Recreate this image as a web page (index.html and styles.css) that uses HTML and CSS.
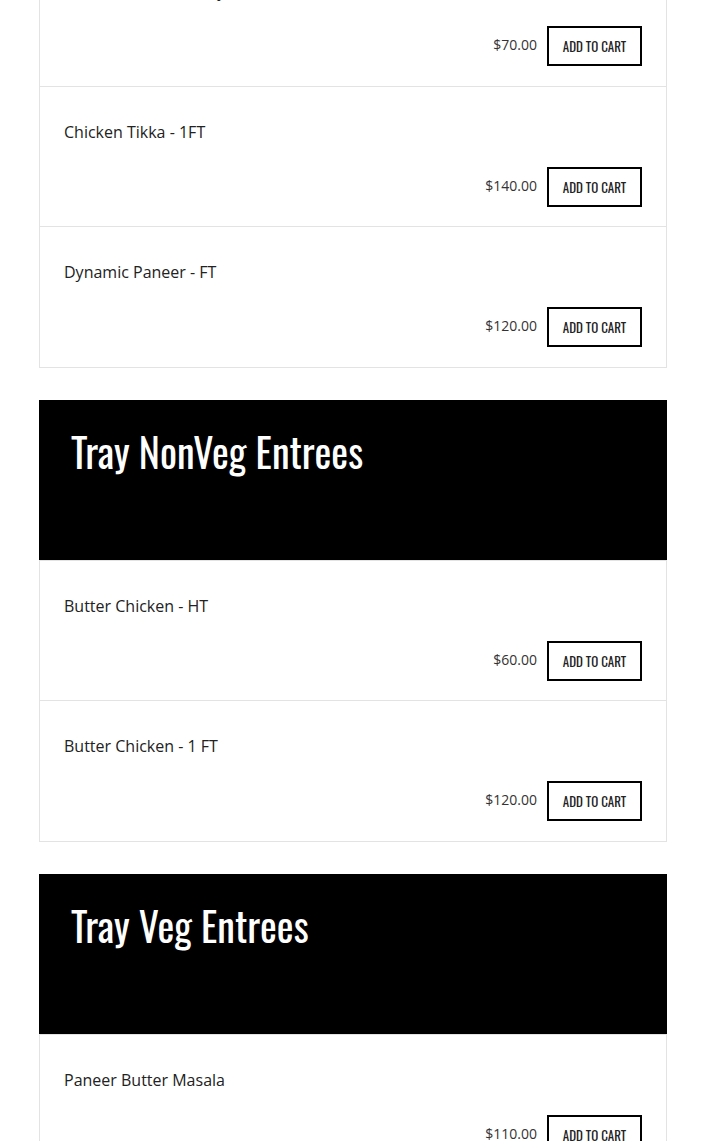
FILE: index.html
```html
<!DOCTYPE html>
<html>
<head>
<meta charset="utf-8">
<link rel="stylesheet" href="styles.css">
</head>
<body>
<div class="menu">
  <section class="category">
    <div class="items">
      <div class="item item-partial">
        <div class="item-name">Chicken 65 - Half Tray</div>
        <div class="item-row"><span class="price">$70.00</span><button class="cart-btn">ADD TO CART</button></div>
      </div>
      <div class="item">
        <div class="item-name">Chicken Tikka - 1FT</div>
        <div class="item-row"><span class="price">$140.00</span><button class="cart-btn">ADD TO CART</button></div>
      </div>
      <div class="item">
        <div class="item-name">Dynamic Paneer - FT</div>
        <div class="item-row"><span class="price">$120.00</span><button class="cart-btn">ADD TO CART</button></div>
      </div>
    </div>
  </section>
  <section class="category">
    <div class="cat-header"><h2 class="cat-title">Tray NonVeg Entrees</h2></div>
    <div class="items">
      <div class="item">
        <div class="item-name">Butter Chicken - HT</div>
        <div class="item-row"><span class="price">$60.00</span><button class="cart-btn">ADD TO CART</button></div>
      </div>
      <div class="item">
        <div class="item-name">Butter Chicken - 1 FT</div>
        <div class="item-row"><span class="price">$120.00</span><button class="cart-btn">ADD TO CART</button></div>
      </div>
    </div>
  </section>
  <section class="category">
    <div class="cat-header"><h2 class="cat-title">Tray Veg Entrees</h2></div>
    <div class="items">
      <div class="item">
        <div class="item-name">Paneer Butter Masala</div>
        <div class="item-row"><span class="price">$110.00</span><button class="cart-btn">ADD TO CART</button></div>
      </div>
      <div class="item">
        <div class="item-name">Dal Makhani - HT</div>
        <div class="item-row"><span class="price">$60.00</span><button class="cart-btn">ADD TO CART</button></div>
      </div>
    </div>
  </section>
</div>
</body>
</html>
```
FILE: styles.css
```css
html, body {
  margin: 0;
  padding: 0;
  background: #fff;
}
body {
  font-family: "Open Sans", "Liberation Sans", sans-serif;
  color: #222;
  overflow: hidden;
}
.menu {
  width: 628px;
  margin: -54px 0 0 39px;
  display: flex;
  flex-direction: column;
  gap: 32px;
}
.category {
  display: flex;
  flex-direction: column;
}
.cat-header {
  background: #000;
  height: 160px;
  box-sizing: border-box;
  padding: 23px 32px 0;
}
.cat-title {
  margin: 0;
  color: #fff;
  font-family: "Oswald", "Liberation Sans Narrow", "DejaVu Sans Condensed", sans-serif;
  font-weight: normal;
  font-size: 40px;
  line-height: 56px;
}
.items {
  border: 1px solid #e3e3e3;
}
.item {
  padding: 34px 24px 19px;
  border-bottom: 1px solid #e3e3e3;
}
.item.item-partial {
  padding-top: 33px;
  padding-bottom: 20px;
}
.item:last-child {
  border-bottom: none;
  padding-bottom: 20px;
}
.item-name {
  font-size: 16px;
  line-height: 22px;
  color: #222;
}
.item-row {
  margin-top: 24px;
  display: flex;
  justify-content: flex-end;
  align-items: center;
  gap: 10px;
}
.price {
  font-size: 14px;
  color: #333;
  margin-top: -4px;
}
.cart-btn {
  width: 95px;
  height: 40px;
  box-sizing: border-box;
  border: 2px solid #000;
  background: #fff;
  color: #222;
  font-family: "Oswald", "Liberation Sans Narrow", "DejaVu Sans Condensed", sans-serif;
  font-size: 13px;
  padding: 0;
  cursor: pointer;
}
```
